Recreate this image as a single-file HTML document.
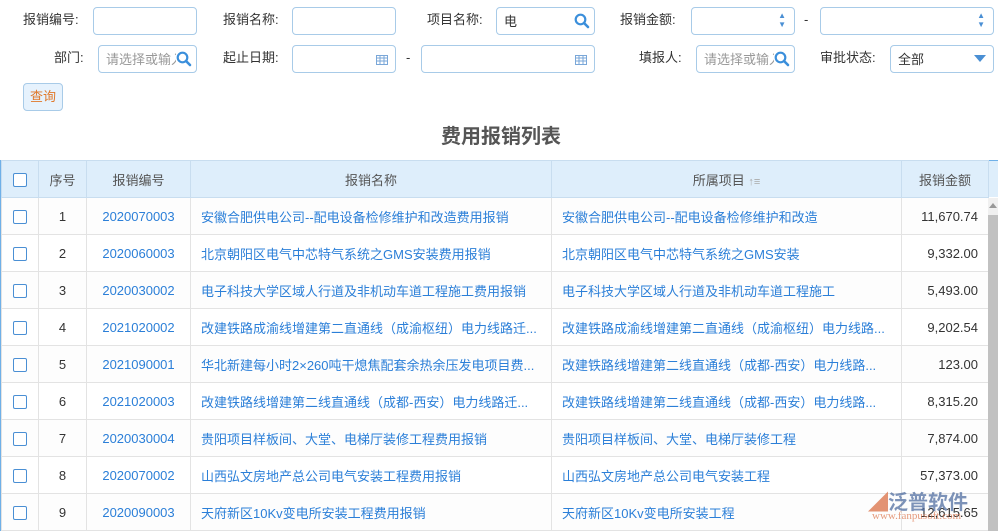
<!DOCTYPE html>
<html><head><meta charset="utf-8"><style>
*{box-sizing:border-box;margin:0;padding:0}
body{width:998px;height:531px;overflow:hidden;background:#fff;font-family:"Liberation Sans","Noto Sans CJK SC",sans-serif;font-size:13px;color:#333;position:relative}
.a{position:absolute}
.lbl{position:absolute;font-size:13px;color:#333;line-height:16px}
.in{position:absolute;border:1px solid #a8cbe8;border-radius:4px;height:28px;background:#fff}
.ph{position:absolute;left:7px;top:3px;color:#999;font-size:13px;white-space:nowrap;overflow:hidden}
.sr{position:absolute;right:4px;top:5px}
table{position:absolute;left:1px;top:160px;border-collapse:collapse;table-layout:fixed;width:987px}
td,th{border:1px solid #e3e3e3;height:37px;font-weight:normal;white-space:nowrap;overflow:hidden;text-overflow:ellipsis}
th{background:#deeefb;color:#555;border-color:#c8ddef;text-align:center}
td{text-align:center}
td.l{text-align:left;padding-left:10px;color:#2b7fd8}
td.n{color:#2b7fd8}
td.r{text-align:right;padding-right:10px;color:#333}
.cb{display:inline-block;width:14px;height:14px;border:1px solid #4a8fd4;border-radius:2px;background:#fff;vertical-align:middle}
tr:nth-child(even) td{background:#fdfdfd}
</style></head><body>
<div class="lbl" style="left:23px;top:12px">报销编号:</div>
<div class="in" style="left:93px;top:7px;width:104px"></div>
<div class="lbl" style="left:223px;top:12px">报销名称:</div>
<div class="in" style="left:292px;top:7px;width:104px"></div>
<div class="lbl" style="left:427px;top:12px">项目名称:</div>
<div class="in" style="left:496px;top:7px;width:99px"><span class="a" style="left:7px;top:3px;color:#333">电</span><svg class="sr" width="16" height="16" viewBox="0 0 16 16"><circle cx="6.5" cy="6.5" r="4.8" fill="none" stroke="#3b8fdb" stroke-width="2.2"/><path d="M10 10l4 4" stroke="#3b8fdb" stroke-width="2.6" stroke-linecap="round"/></svg></div>
<div class="lbl" style="left:620px;top:12px">报销金额:</div>
<div class="in" style="left:691px;top:7px;width:104px"><span class="a" style="right:8px;top:3px;color:#4a8fd4;font-size:8px;line-height:9px">▲<br>▼</span></div>
<div class="lbl" style="left:804px;top:12px">-</div>
<div class="in" style="left:820px;top:7px;width:174px"><span class="a" style="right:8px;top:3px;color:#4a8fd4;font-size:8px;line-height:9px">▲<br>▼</span></div>

<div class="lbl" style="left:54px;top:50px">部门:</div>
<div class="in" style="left:98px;top:45px;width:99px"><span class="ph" style="width:70px">请选择或输入</span><svg class="sr" width="16" height="16" viewBox="0 0 16 16"><circle cx="6.5" cy="6.5" r="4.8" fill="none" stroke="#3b8fdb" stroke-width="2.2"/><path d="M10 10l4 4" stroke="#3b8fdb" stroke-width="2.6" stroke-linecap="round"/></svg></div>
<div class="lbl" style="left:223px;top:50px">起止日期:</div>
<div class="in" style="left:292px;top:45px;width:104px"><svg class="a" style="right:7px;top:8px" width="12" height="11"><rect x="0.5" y="1.5" width="11" height="9" fill="none" stroke="#7aa7d8"/><path d="M0 4h12M4 2v9M8 2v9M0 7h12" stroke="#7aa7d8"/></svg></div>
<div class="lbl" style="left:406px;top:50px">-</div>
<div class="in" style="left:421px;top:45px;width:174px"><svg class="a" style="right:7px;top:8px" width="12" height="11"><rect x="0.5" y="1.5" width="11" height="9" fill="none" stroke="#7aa7d8"/><path d="M0 4h12M4 2v9M8 2v9M0 7h12" stroke="#7aa7d8"/></svg></div>
<div class="lbl" style="left:639px;top:50px">填报人:</div>
<div class="in" style="left:696px;top:45px;width:99px"><span class="ph" style="width:70px">请选择或输入</span><svg class="sr" width="16" height="16" viewBox="0 0 16 16"><circle cx="6.5" cy="6.5" r="4.8" fill="none" stroke="#3b8fdb" stroke-width="2.2"/><path d="M10 10l4 4" stroke="#3b8fdb" stroke-width="2.6" stroke-linecap="round"/></svg></div>
<div class="lbl" style="left:820px;top:50px">审批状态:</div>
<div class="in" style="left:890px;top:45px;width:104px"><span class="a" style="left:7px;top:3px;color:#333">全部</span><span class="a" style="right:7px;top:9px;width:0;height:0;border-left:6px solid transparent;border-right:6px solid transparent;border-top:7px solid #4a8fd4"></span></div>

<div class="a" style="left:23px;top:83px;width:40px;height:28px;background:#e6f2fd;border:1px solid #a8cbe8;border-radius:4px;color:#e0782a;text-align:center;line-height:26px">查询</div>
<div class="a" style="left:0;top:120px;width:1002px;text-align:center;font-size:20px;font-weight:bold;color:#555">费用报销列表</div>

<div class="a" style="left:0;top:160px;width:998px;height:37px;background:#deeefb;border-top:1px solid #6fb0e8"></div>
<div class="a" style="left:0;top:160px;width:1px;height:371px;background:#6fb0e8"></div>
<table>
<colgroup><col style="width:37px"><col style="width:48px"><col style="width:104px"><col style="width:361px"><col style="width:350px"><col style="width:87px"></colgroup>
<tr><th><span class="cb"></span></th><th>序号</th><th>报销编号</th><th>报销名称</th><th>所属项目 <span style="color:#aaa;font-size:11px">↑≡</span></th><th>报销金额</th></tr>
<tr><td><span class="cb"></span></td><td>1</td><td class="n">2020070003</td><td class="l">安徽合肥供电公司--配电设备检修维护和改造费用报销</td><td class="l">安徽合肥供电公司--配电设备检修维护和改造</td><td class="r">11,670.74</td></tr>
<tr><td><span class="cb"></span></td><td>2</td><td class="n">2020060003</td><td class="l">北京朝阳区电气中芯特气系统之GMS安装费用报销</td><td class="l">北京朝阳区电气中芯特气系统之GMS安装</td><td class="r">9,332.00</td></tr>
<tr><td><span class="cb"></span></td><td>3</td><td class="n">2020030002</td><td class="l">电子科技大学区域人行道及非机动车道工程施工费用报销</td><td class="l">电子科技大学区域人行道及非机动车道工程施工</td><td class="r">5,493.00</td></tr>
<tr><td><span class="cb"></span></td><td>4</td><td class="n">2021020002</td><td class="l">改建铁路成渝线增建第二直通线（成渝枢纽）电力线路迁...</td><td class="l">改建铁路成渝线增建第二直通线（成渝枢纽）电力线路...</td><td class="r">9,202.54</td></tr>
<tr><td><span class="cb"></span></td><td>5</td><td class="n">2021090001</td><td class="l">华北新建每小时2×260吨干熄焦配套余热余压发电项目费...</td><td class="l">改建铁路线增建第二线直通线（成都-西安）电力线路...</td><td class="r">123.00</td></tr>
<tr><td><span class="cb"></span></td><td>6</td><td class="n">2021020003</td><td class="l">改建铁路线增建第二线直通线（成都-西安）电力线路迁...</td><td class="l">改建铁路线增建第二线直通线（成都-西安）电力线路...</td><td class="r">8,315.20</td></tr>
<tr><td><span class="cb"></span></td><td>7</td><td class="n">2020030004</td><td class="l">贵阳项目样板间、大堂、电梯厅装修工程费用报销</td><td class="l">贵阳项目样板间、大堂、电梯厅装修工程</td><td class="r">7,874.00</td></tr>
<tr><td><span class="cb"></span></td><td>8</td><td class="n">2020070002</td><td class="l">山西弘文房地产总公司电气安装工程费用报销</td><td class="l">山西弘文房地产总公司电气安装工程</td><td class="r">57,373.00</td></tr>
<tr><td><span class="cb"></span></td><td>9</td><td class="n">2020090003</td><td class="l">天府新区10Kv变电所安装工程费用报销</td><td class="l">天府新区10Kv变电所安装工程</td><td class="r">12,615.65</td></tr>
</table>
<div class="a" style="left:988px;top:198px;width:10px;height:333px;background:#f0f0f0"></div>
<div class="a" style="left:988px;top:215px;width:10px;height:316px;background:#c1c1c1"></div>
<div class="a" style="left:989px;top:203px;width:0;height:0;border-left:4px solid transparent;border-right:4px solid transparent;border-bottom:5px solid #999"></div>
<div class="a" style="left:868px;top:486px;font-size:20px;font-weight:bold;color:rgba(80,110,160,0.75)"><span style="color:rgba(220,120,80,0.8)">◢</span>泛普软件</div>
<div class="a" style="left:872px;top:510px;font-size:11px;color:rgba(220,120,80,0.75);font-family:'Liberation Serif',serif">www.fanpusoft.com</div>
</body></html>
